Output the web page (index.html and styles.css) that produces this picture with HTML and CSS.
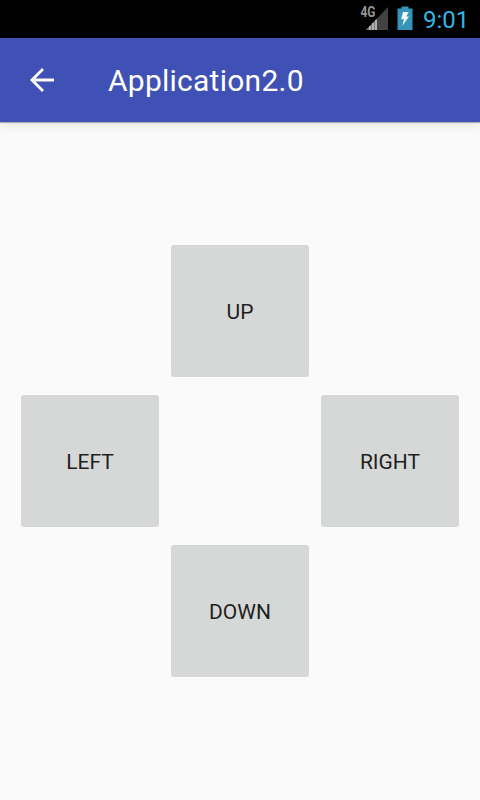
FILE: index.html
```html
<!DOCTYPE html>
<html lang="en">
<head>
<meta charset="utf-8">
<title>Application2.0</title>
<link rel="stylesheet" href="styles.css">
</head>
<body>
<div class="status-bar">
  <svg class="signal" width="30" height="26" viewBox="0 0 30 26">
    <path d="M28 2V25H6Z" fill="#424242"/>
    <path d="M6 25L17 13.5V25Z" fill="#777"/>
    <path d="M10 21V25M13 18V25M16 15V25" stroke="#bdbdbd" stroke-width="1.6"/>
    <text class="network" x="0.5" y="12.3" textLength="15" lengthAdjust="spacingAndGlyphs">4G</text>
  </svg>
  <svg class="battery" width="16" height="24" viewBox="0 0 16 24">
    <path d="M4.5 .5H11.5V2.5H15.5V24H.5V2.5H4.5Z" fill="#3594ba"/>
    <path d="M6 6H11.7L9.3 10.5H12L5.3 20L7 13.2H4Z" fill="#eef7fa"/>
  </svg>
  <span class="clock">9:01</span>
</div>
<header class="app-bar">
  <svg class="back" width="24" height="24" viewBox="0 0 24 24">
    <path d="M24 12H2M13 1L2 12L13 23" fill="none" stroke="#fff" stroke-width="2.8"/>
  </svg>
  <h1 class="title">Application2.0</h1>
</header>
<main class="pad">
  <button class="key up">UP</button>
  <button class="key left">LEFT</button>
  <button class="key right">RIGHT</button>
  <button class="key down">DOWN</button>
</main>
</body>
</html>
```
FILE: styles.css
```css
body {
  margin: 0;
  height: 800px;
  display: flex;
  flex-direction: column;
  background: #fafafa;
  font-family: Roboto, "Liberation Sans", sans-serif;
  overflow: hidden;
}
.status-bar {
  height: 38px;
  box-sizing: border-box;
  padding-right: 12px;
  display: flex;
  justify-content: flex-end;
  background: #000;
}
.signal {
  margin: 5px 7px 0 0;
}
.network {
  font: bold 14px Roboto, sans-serif;
  fill: #969696;
}
.battery {
  margin: 6px 10px 0 0;
}
.clock {
  width: 45px;
  color: #33b5e5;
  font-size: 24px;
  line-height: 41px;
  white-space: nowrap;
}
.app-bar {
  height: 84px;
  display: flex;
  align-items: center;
  background: #3f51b5;
  box-shadow: 0 1px 1px rgba(0, 0, 0, .25), 0 3px 10px rgba(0, 0, 0, .09);
}
.back {
  margin-left: 30px;
}
.title {
  margin: 0 0 0 54px;
  padding-top: 2px;
  color: #fff;
  font-size: 30px;
  font-weight: 400;
  line-height: 82px;
  letter-spacing: .25px;
}
.pad {
  display: grid;
  grid-template: repeat(3, 132px) / repeat(3, 138px);
  grid-template-areas: ". up ." "left . right" ". down .";
  gap: 18px 12px;
  margin: 123px auto 0;
}
.key {
  padding: 2px 0 0;
  border: 0;
  border-radius: 3px;
  background: #d6d8d7;
  color: #1e1f1e;
  font: 400 21px Roboto, "Liberation Sans", sans-serif;
}
.up {
  grid-area: up;
}
.left {
  grid-area: left;
}
.right {
  grid-area: right;
}
.down {
  grid-area: down;
}
```
